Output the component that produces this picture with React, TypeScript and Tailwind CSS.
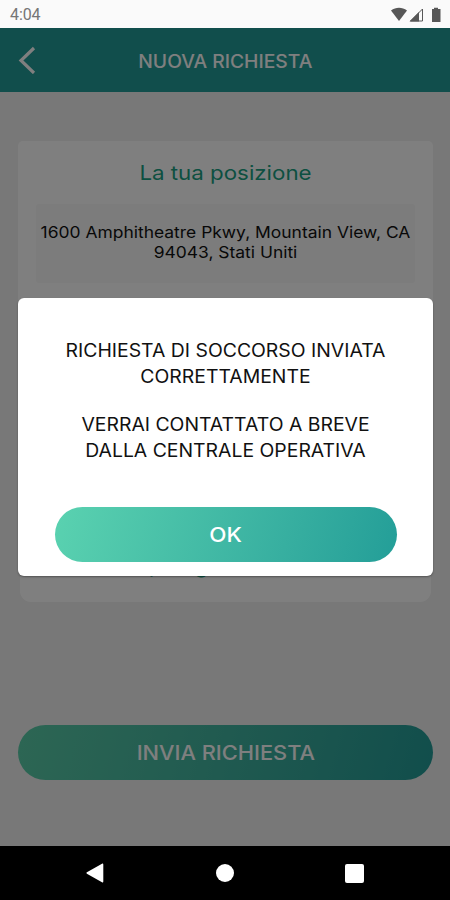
import React, { useState } from 'react';

function StatusBar() {
  return (
    <div className="h-[28px] shrink-0 bg-[#fafafa] flex items-center justify-between pl-[10px] pr-[8px] text-[#575757]">
      <span className="font-[Roboto] text-[16px] leading-none tracking-[-0.1px] text-[#757575] pt-[2px]">4:04</span>
      <svg width="51" height="16" viewBox="0 0 51 16" fill="none" className="mt-px">
        <path d="M0 3.6C4.8 -0.2 11.2 -0.2 16 3.6L8 14Z" fill="currentColor" />
        <path d="M19.5 14L31.5 2V14Z" stroke="currentColor" strokeWidth="1" />
        <path d="M18.5 14.5L28 5V14.5Z" fill="currentColor" />
        <path d="M43 2V0.8H47V2H49.5V15H41V2Z" fill="currentColor" />
      </svg>
    </div>
  );
}

function NavigationBar() {
  return (
    <nav className="h-[54px] shrink-0 bg-black flex items-center justify-between pl-[86px] pr-[86px] text-white">
      <svg width="18" height="20" viewBox="0 0 18 20" fill="currentColor">
        <path d="M16 0.7C16.7 0.3 17.3 0.6 17.3 1.4V18.6C17.3 19.4 16.7 19.7 16 19.3L0.9 10.7C0.3 10.3 0.3 9.7 0.9 9.3Z" />
      </svg>
      <div className="w-[18px] h-[18px] rounded-full bg-white" />
      <div className="w-[19px] h-[19px] rounded-[2px] bg-white" />
    </nav>
  );
}

export default function App() {
  const [open, setOpen] = useState(true);

  return (
    <div className="w-[450px] h-[900px] flex flex-col overflow-hidden font-[Inter,sans-serif]">
      <StatusBar />

      <main className="relative flex-1 min-h-0 flex flex-col bg-[#f0f0f0]">
        <header className="h-[64px] shrink-0 bg-[#229c98] flex items-center">
          <button className="w-[54px] pl-[18px]">
            <svg width="18" height="28" viewBox="0 0 18 28" fill="none" stroke="white" strokeWidth="3.2">
              <path d="M16 2L3 14.5L16 27" />
            </svg>
          </button>
          <h1 className="flex-1 text-center text-[18px] font-medium text-white pr-[53px] pt-[2px] whitespace-nowrap">
            <span className="inline-block scale-x-[1.07]">NUOVA RICHIESTA</span>
          </h1>
        </header>

        <section className="mt-[49px] ml-[18px] mr-[17px] h-[240px] shrink-0 rounded-[5px] bg-white px-[18px] pt-[18px] text-center">
          <h2 className="text-[20px] leading-[28px] text-[#1aa183] scale-x-[1.115]">La tua posizione</h2>
          <div className="mt-[17px] h-[79px] rounded-[3px] bg-[#f8f8f8] pt-[18px] text-[16px] leading-[20px] text-[#111] whitespace-nowrap">
            <p className="scale-x-[1.09]">1600 Amphitheatre Pkwy, Mountain View, CA</p>
            <p className="scale-x-[1.09]">94043, Stati Uniti</p>
          </div>
        </section>

        <section className="mt-[12px] ml-[20px] mr-[19px] h-[209px] shrink-0 rounded-[11px] bg-white flex flex-col justify-end items-center pb-[22px]">
          <h2 className="text-[20px] leading-[28px] text-[#1aa183] scale-x-[1.115]">Tipologia richiesta</h2>
        </section>

        <button className="mt-[123px] ml-[18px] mr-[17px] h-[55px] shrink-0 rounded-full bg-linear-105 from-[#5acda8] to-[#229c98] text-[20px] font-medium text-white">
          <span className="inline-block scale-x-[1.09]">INVIA RICHIESTA</span>
        </button>

        {open && (
          <div className="absolute inset-0 bg-black/50 pl-[18px] pr-[17px] pt-[270px]">
            <div
              role="dialog"
              className="h-[278px] rounded-[6px] bg-white pt-[40px] text-center shadow-[0_1px_2px_rgba(0,0,0,0.35)]"
            >
              <p className="text-[18px] leading-[25.5px] text-[#111] whitespace-nowrap scale-x-[1.077]">
                RICHIESTA DI SOCCORSO INVIATA
                <br />
                CORRETTAMENTE
              </p>
              <p className="mt-[23px] text-[18px] leading-[25.5px] text-[#111] whitespace-nowrap scale-x-[1.077]">
                VERRAI CONTATTATO A BREVE
                <br />
                DALLA CENTRALE OPERATIVA
              </p>
              <button
                onClick={() => setOpen(false)}
                className="mt-[44px] w-[342px] h-[55px] rounded-full bg-linear-105 from-[#5ad2b0] to-[#239e98] text-[20px] font-medium text-white"
              >
                <span className="inline-block scale-x-[1.12]">OK</span>
              </button>
            </div>
          </div>
        )}
      </main>

      <NavigationBar />
    </div>
  );
}
